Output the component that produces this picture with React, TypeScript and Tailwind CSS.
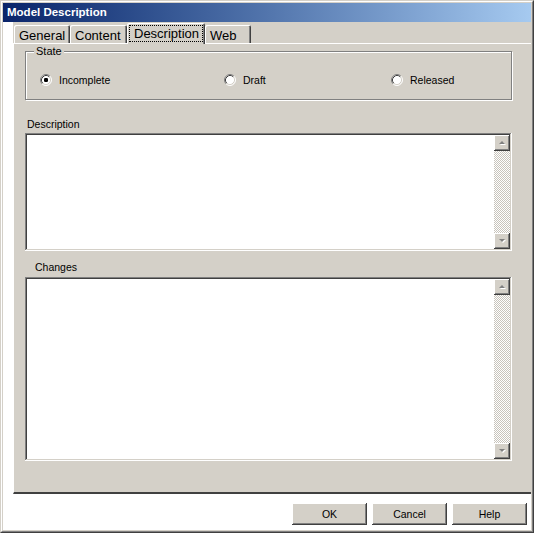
import React from "react";

// classic 3d borders
const raised =
  "shadow-[inset_-1px_-1px_#404040,inset_1px_1px_#ffffff,inset_-2px_-2px_#808080,inset_2px_2px_#d4d0c8]";
const sunken =
  "shadow-[inset_-1px_-1px_#ffffff,inset_1px_1px_#808080,inset_-2px_-2px_#d4d0c8,inset_2px_2px_#404040]";

function Radio({ checked }: { checked?: boolean }) {
  return (
    <svg width="12" height="12" viewBox="0 0 12 12" className="shrink-0">
      <circle cx="6" cy="6" r="5" fill="#ffffff" />
      <path d="M2.11 9.89 A5.5 5.5 0 0 1 9.89 2.11" stroke="#808080" fill="none" />
      <path d="M9.89 2.11 A5.5 5.5 0 0 1 2.11 9.89" stroke="#ffffff" fill="none" />
      <path d="M2.82 9.18 A4.5 4.5 0 0 1 9.18 2.82" stroke="#404040" fill="none" />
      <path d="M9.18 2.82 A4.5 4.5 0 0 1 2.82 9.18" stroke="#d4d0c8" fill="none" />
      {checked && <rect x="4" y="4" width="4" height="4" rx="1.2" fill="#000000" />}
    </svg>
  );
}

function ScrollButton({ dir }: { dir: "up" | "down" }) {
  const pts = dir === "up" ? "5,9 8,6 11,9" : "5,6 8,9 11,6";
  const shadowPts = dir === "up" ? "6,10 9,7 12,10" : "6,7 9,10 12,7";
  return (
    <div className={`w-[16px] h-[16px] bg-[#d4d0c8] ${raised}`}>
      <svg width="16" height="16" viewBox="0 0 16 16">
        <polygon points={shadowPts} fill="#ffffff" />
        <polygon points={pts} fill="#808080" />
      </svg>
    </div>
  );
}

function TextBox({ height }: { height: string }) {
  return (
    <div className={`${height} w-[487px] bg-white p-[2px] flex ${sunken}`}>
      <div className="flex-1" />
      <div className="w-[16px] flex flex-col bg-[image:repeating-conic-gradient(#c8c4bc_0_25%,#ffffff_0_50%)] bg-[length:2px_2px]">
        <ScrollButton dir="up" />
        <div className="flex-1" />
        <ScrollButton dir="down" />
      </div>
    </div>
  );
}

const tabs = [
  { name: "General", w: "w-[56px]" },
  { name: "Content", w: "w-[57px]" },
  { name: "Description", w: "w-[78px]", active: true },
  { name: "Web", w: "w-[46px]" },
];

const states = [
  { label: "Incomplete", w: "w-[184px]", checked: true },
  { label: "Draft", w: "w-[167px]" },
  { label: "Released", w: "w-auto" },
];

export default function App() {
  return (
    <div className="w-[534px] h-[533px] border border-t-[#d4d0c8] border-l-[#d4d0c8] border-r-[#404040] border-b-[#404040] font-['Liberation_Sans',Arial,sans-serif] text-black">
      <div className="h-full border border-t-white border-l-white border-r-[#808080] border-b-[#808080] bg-[#d4d0c8] p-px flex flex-col">
        {/* title bar */}
        <div className="h-[19px] shrink-0 bg-gradient-to-r from-[#0a246a] to-[#a6caf0] flex items-center pl-[4px] text-white font-bold text-[11.5px]">
          Model Description
        </div>

        <div className="flex-1 bg-white flex flex-col">
          {/* tab control */}
          <div className="h-[472px] ml-[10px] bg-[#d4d0c8] flex flex-col">
            <div className="h-[21px] shrink-0 flex items-end pl-[1px]">
              {tabs.map((t) =>
                t.active ? (
                  <div
                    key={t.name}
                    className={`${t.w} h-[21px] -mb-px relative z-10 bg-[#d4d0c8] rounded-t-[2px] p-[2px] shadow-[inset_1px_1px_#ffffff,inset_-1px_0_#404040,inset_-2px_0_#808080]`}
                  >
                    <div className="h-full border border-dotted border-black flex items-center pl-[4px] text-[13px] leading-none">
                      {t.name}
                    </div>
                  </div>
                ) : (
                  <div
                    key={t.name}
                    className={`${t.w} h-[18px] rounded-t-[2px] flex items-center pl-[5px] text-[13px] leading-none pt-[2px] shadow-[inset_1px_1px_#ffffff,inset_-1px_0_#404040,inset_-2px_0_#808080]`}
                  >
                    {t.name}
                  </div>
                )
              )}
            </div>

            <div className="flex-1 border-t border-l border-t-white border-l-white border-b-2 border-b-[#404040] pl-[11px] flex flex-col">
              {/* State group */}
              <div className="relative mt-[7px] w-[487px] h-[49px] border border-[#808080] shadow-[inset_1px_1px_#ffffff,1px_1px_#ffffff] flex items-center pl-[14px] pt-[9px]">
                <span className="absolute left-[8px] -top-[7px] bg-[#d4d0c8] px-[2px] text-[11px] leading-[12px]">
                  State
                </span>
                {states.map((s) => (
                  <div key={s.label} className={`${s.w} flex items-center gap-[7px]`}>
                    <Radio checked={s.checked} />
                    <span className="text-[10.5px] leading-[12px]">{s.label}</span>
                  </div>
                ))}
              </div>

              <div className="mt-[18px] ml-[2px] h-[12px] text-[10.5px] leading-[12px]">Description</div>
              <div className="mt-[3px]">
                <TextBox height="h-[118px]" />
              </div>

              <div className="mt-[10px] ml-[10px] h-[12px] text-[10.5px] leading-[12px]">Changes</div>
              <div className="mt-[4px]">
                <TextBox height="h-[184px]" />
              </div>
            </div>
          </div>

          {/* buttons */}
          <div className="flex justify-end gap-[5px] pt-[9px] pr-[4px]">
            {["OK", "Cancel", "Help"].map((b) => (
              <button
                key={b}
                className={`w-[75px] h-[22px] bg-[#d4d0c8] text-[10.5px] leading-none ${raised}`}
              >
                {b}
              </button>
            ))}
          </div>
        </div>
      </div>
    </div>
  );
}
